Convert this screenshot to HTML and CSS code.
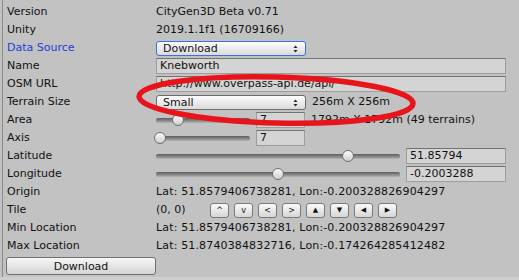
FILE: index.html
```html
<!DOCTYPE html>
<html>
<head>
<meta charset="utf-8">
<link rel="stylesheet" href="styles.css">
</head>
<body>
<div class="panel">
  <div class="rows">
    <div class="row"><span class="label">Version</span><span class="value">CityGen3D Beta v0.71</span></div>
    <div class="row"><span class="label">Unity</span><span class="value">2019.1.1f1 (16709166)</span></div>
    <div class="row"><span class="label link">Data Source</span>
      <span class="value"><span class="popup focused">Download<svg class="updown" width="5" height="8" viewBox="0 0 5 8"><path d="M0.5 3 L2.5 0.5 L4.5 3 Z M0.5 5 L2.5 7.5 L4.5 5 Z" fill="#222"/></svg></span></span></div>
    <div class="row"><span class="label">Name</span><span class="value"><span class="field wide">Knebworth</span></span></div>
    <div class="row"><span class="label">OSM URL</span><span class="value"><span class="field wide">http://www.overpass-api.de/api/</span></span></div>
    <div class="row"><span class="label">Terrain Size</span>
      <span class="value"><span class="popup">Small<svg class="updown" width="5" height="8" viewBox="0 0 5 8"><path d="M0.5 3 L2.5 0.5 L4.5 3 Z M0.5 5 L2.5 7.5 L4.5 5 Z" fill="#222"/></svg></span><span class="note">256m X 256m</span></span></div>
    <div class="row"><span class="label">Area</span>
      <span class="value"><span class="slider short"><span class="track"></span><span class="thumb" style="left:16px"></span></span><span class="field num">7</span><span class="note">1792m X 1792m (49 terrains)</span></span></div>
    <div class="row"><span class="label">Axis</span>
      <span class="value"><span class="slider short"><span class="track"></span><span class="thumb" style="left:-2px"></span></span><span class="field num">7</span></span></div>
    <div class="row"><span class="label">Latitude</span>
      <span class="value"><span class="slider long"><span class="track"></span><span class="thumb" style="left:186px"></span></span><span class="field coord">51.85794</span></span></div>
    <div class="row"><span class="label">Longitude</span>
      <span class="value"><span class="slider long"><span class="track"></span><span class="thumb" style="left:116px"></span></span><span class="field coord">-0.2003288</span></span></div>
    <div class="row"><span class="label">Origin</span><span class="value wide-text">Lat: 51.8579406738281, Lon:-0.200328826904297</span></div>
    <div class="row"><span class="label">Tile</span>
      <span class="value"><span class="tilepos">(0, 0)</span>
        <span class="btns">
          <span class="mini">^</span><span class="mini">v</span><span class="mini">&lt;</span><span class="mini">&gt;</span><span class="mini tri">▲</span><span class="mini tri">▼</span><span class="mini tri">◀</span><span class="mini tri">▶</span>
        </span></span></div>
    <div class="row"><span class="label">Min Location</span><span class="value wide-text">Lat: 51.8579406738281, Lon:-0.200328826904297</span></div>
    <div class="row"><span class="label">Max Location</span><span class="value wide-text">Lat: 51.8740384832716, Lon:-0.174264285412482</span></div>
  </div>
  <div class="actions"><button class="download">Download</button></div>
  <svg class="annot" width="519" height="280" viewBox="0 0 519 280">
    <ellipse cx="276" cy="100" rx="137" ry="23" transform="rotate(1.5 276 100)" fill="none" stroke="#e8141c" stroke-width="5.5"/>
  </svg>
</div>
</body>
</html>
```
FILE: styles.css
```css
* { box-sizing: border-box; }
html, body { margin: 0; padding: 0; }
body {
  font-family: "DejaVu Sans", Verdana, sans-serif;
  font-size: 11px;
  color: #111;
  background: #c2c2c2;
}
.panel {
  position: relative;
  width: 519px;
  height: 280px;
  background: #c2c2c2;
  padding: 3px 13px 0 0;
  overflow: hidden;
}
.panel::before {
  content: "";
  position: absolute;
  left: 2px; top: 0; bottom: 0;
  width: 1px;
  background: #8a8a8a;
}
.panel::after {
  content: "";
  position: absolute;
  left: 0; right: 0; bottom: 0;
  height: 3px;
  background: #cfcfcf;
}
.rows { display: flex; flex-direction: column; padding-left: 7px; }
.row {
  display: grid;
  grid-template-columns: 149px 1fr;
  height: 18px;
  align-items: center;
  white-space: nowrap;
}
.label { line-height: 18px; }
.link { color: #1f3ddb; }
.value { display: flex; align-items: center; line-height: 18px; }
.wide-text { letter-spacing: 0.15px; }
.popup {
  position: relative;
  display: flex;
  align-items: center;
  width: 150px;
  height: 15px;
  padding-left: 6px;
  border: 1px solid #6c6c6c;
  border-radius: 3px;
  background: linear-gradient(#fdfdfd, #dadada);
  line-height: 13px;
}
.popup.focused { border-color: #3c6fe6; }
.updown { position: absolute; right: 7px; top: 3px; }
.note { margin-left: 6px; }
.field {
  height: 16px;
  line-height: 14px;
  padding-left: 3px;
  background: #d4d4d4;
  border: 1px solid #9d9d9d;
  border-top-color: #737373;
  overflow: hidden;
}
.field.wide { width: 350px; }
.field.num { width: 49px; margin-left: 6px; }
.field.coord { width: 100px; margin-left: 6px; }
.slider { position: relative; height: 14px; display: flex; align-items: center; }
.slider.short { width: 94px; }
.slider.long { width: 244px; }
.track {
  width: 100%;
  height: 5px;
  background: linear-gradient(#5d5d5d, #8d8d8d 60%, #b5b5b5);
  border-radius: 2px;
}
.thumb {
  position: absolute;
  top: 1px;
  width: 12px;
  height: 12px;
  border-radius: 50%;
  border: 1px solid #6d6d6d;
  background: linear-gradient(#fbfbfb, #cfcfcf);
}
.tilepos { width: 54px; }
.btns { display: flex; gap: 5px; }
.mini {
  width: 19px;
  height: 15px;
  border: 1px solid #7a7a7a;
  border-radius: 3px;
  background: linear-gradient(#fafafa, #d6d6d6);
  font-size: 8px;
  line-height: 13px;
  text-align: center;
  color: #111;
}
.mini.tri { font-size: 7px; }
.actions { padding: 2px 0 0 6px; }
.download {
  display: block;
  width: 150px;
  height: 18px;
  margin: 0;
  padding: 0;
  font-family: "DejaVu Sans", Verdana, sans-serif;
  font-size: 11px;
  color: #111;
  border: 1px solid #707070;
  border-radius: 3px;
  background: linear-gradient(#f7f7f7, #d4d4d4);
}
.annot { position: absolute; left: 0; top: 0; pointer-events: none; }
```
